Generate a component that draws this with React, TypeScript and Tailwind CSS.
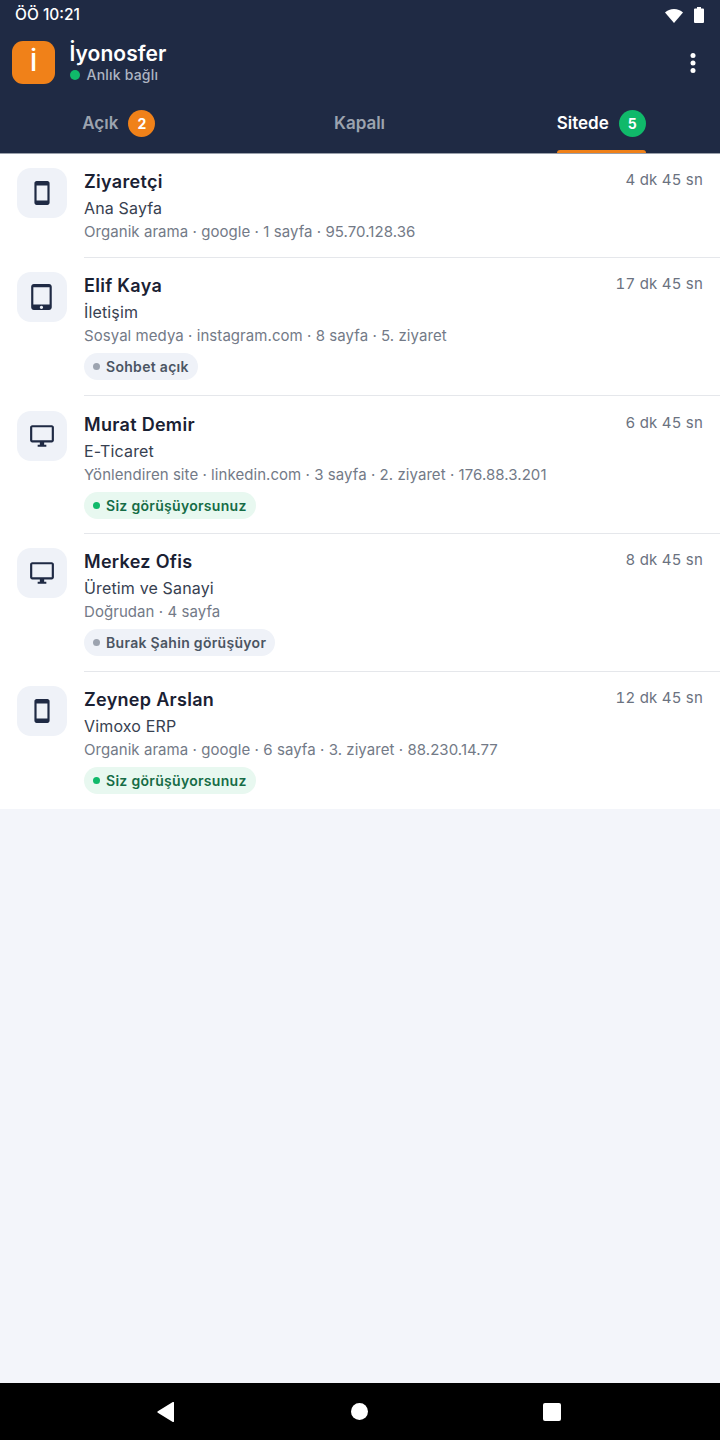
import React from 'react';

type Device = 'phone' | 'tablet' | 'desktop';
type Tone = 'gray' | 'green';

type Visitor = {
    name: string;
    page: string;
    meta: string;
    time: string;
    device: Device;
    padding: string;
    badge?: { label: string; tone: Tone };
};

const visitors: Visitor[] = [
    { name: 'Ziyaretçi', page: 'Ana Sayfa', meta: 'Organik arama · google · 1 sayfa · 95.70.128.36', time: '4 dk 45 sn', device: 'phone', padding: 'pt-[15px] pb-[14px]' },
    { name: 'Elif Kaya', page: 'İletişim', meta: 'Sosyal medya · instagram.com · 8 sayfa · 5. ziyaret', time: '17 dk 45 sn', device: 'tablet', padding: 'pt-[14.4px] pb-[14.5px]', badge: { label: 'Sohbet açık', tone: 'gray' } },
    { name: 'Murat Demir', page: 'E-Ticaret', meta: 'Yönlendiren site · linkedin.com · 3 sayfa · 2. ziyaret · 176.88.3.201', time: '6 dk 45 sn', device: 'desktop', padding: 'pt-[15px] pb-[13.9px]', badge: { label: 'Siz görüşüyorsunuz', tone: 'green' } },
    { name: 'Merkez Ofis', page: 'Üretim ve Sanayi', meta: 'Doğrudan · 4 sayfa', time: '8 dk 45 sn', device: 'desktop', padding: 'pt-[14.4px] pb-[14.5px]', badge: { label: 'Burak Şahin görüşüyor', tone: 'gray' } },
    { name: 'Zeynep Arslan', page: 'Vimoxo ERP', meta: 'Organik arama · google · 6 sayfa · 3. ziyaret · 88.230.14.77', time: '12 dk 45 sn', device: 'phone', padding: 'pt-[14.4px] pb-[14.5px]', badge: { label: 'Siz görüşüyorsunuz', tone: 'green' } },
];

const devicePaths: Record<Device, string> = {
    phone: 'M17 1.01L7 1c-1.1 0-2 .9-2 2v18c0 1.1.9 2 2 2h10c1.1 0 2-.9 2-2V3c0-1.1-.9-1.99-2-1.99zM17 19H7V5h10v14z',
    tablet: 'M18.5 0h-14C3.12 0 2 1.12 2 2.5v19C2 22.88 3.12 24 4.5 24h14c1.38 0 2.5-1.12 2.5-2.5v-19C21 1.12 19.88 0 18.5 0zm-7 23c-.83 0-1.5-.67-1.5-1.5s.67-1.5 1.5-1.5 1.5.67 1.5 1.5-.67 1.5-1.5 1.5zm7.5-4H4V3h15v16z',
    desktop: 'M21 2H3c-1.1 0-2 .9-2 2v12c0 1.1.9 2 2 2h7v2H8v2h8v-2h-2v-2h7c1.1 0 2-.9 2-2V4c0-1.1-.9-2-2-2zm0 14H3V4h18v12z',
};

const DeviceIcon = ({ device }: { device: Device }) => (
    <div className="w-[50px] h-[50px] shrink-0 rounded-[14px] bg-[#eff2f8] flex items-center justify-center">
        <svg width="26" height="26" viewBox="0 0 24 24" fill="#1f2a44">
            <path d={devicePaths[device]} />
        </svg>
    </div>
);

const VisitorRow = ({ visitor }: { visitor: Visitor }) => {
    const { name, page, meta, time, device, badge, padding } = visitor;
    return (
        <div className={`flex gap-[17px] pl-[17px] pr-[17px] ${padding}`}>
            <DeviceIcon device={device} />
            <div className="flex-1 min-w-0">
                <div className="flex items-start justify-between">
                    <span className="text-[18px] leading-[27px] font-semibold tracking-[0.3px] text-[#1a2133]">{name}</span>
                    <span className="text-[15px] leading-[22px] tracking-[0.2px] tabular-nums text-[#6b7280] mt-[1px]">{time}</span>
                </div>
                <p className="text-[16px] leading-[23px] tracking-[0.15px] text-[#374151] mt-[2px]">{page}</p>
                <p className="text-[15px] leading-[23px] text-[#737a87] tracking-[0.06px]">{meta}</p>
                {badge && (
                    <div className={`inline-flex items-center gap-[6px] h-[27px] mt-[6px] px-[9px] rounded-full ${badge.tone === 'green' ? 'bg-[#e8f8f0]' : 'bg-[#eff2f8]'}`}>
                        <span className={`w-[7px] h-[7px] rounded-full ${badge.tone === 'green' ? 'bg-[#10b96a]' : 'bg-[#9ca3af]'}`} />
                        <span className={`text-[14px] font-semibold tracking-[0.3px] ${badge.tone === 'green' ? 'text-[#166c46]' : 'text-[#4b5563]'}`}>{badge.label}</span>
                    </div>
                )}
            </div>
        </div>
    );
};

const Tab = ({ label, count, color, active, className }: { label: string; count?: number; color?: string; active?: boolean; className?: string }) => (
    <div className={`flex-1 flex justify-center ${className ?? ''}`}>
        <div className="relative h-[54px] pb-[6px] flex items-center gap-[10px]">
            <span className={`text-[17px] font-semibold mt-[2px] ${active ? 'text-white' : 'text-[#9ca3af]'}`}>{label}</span>
            {count !== undefined && (
                <span className={`w-[27px] h-[27px] rounded-full text-white text-[14px] font-bold flex items-center justify-center ${color}`}>{count}</span>
            )}
            {active && <div className="absolute left-0 right-0 bottom-0 h-[3px] rounded-t-[3px] bg-[#f08119]" />}
        </div>
    </div>
);

export default function App() {
    return (
        <div className="w-[720px] h-[1440px] flex flex-col bg-[#f3f5fa] overflow-hidden" style={{ fontFamily: 'Inter, sans-serif' }}>
            <div className="relative z-10 bg-[#1f2a44] shadow-[0_1px_0_#9aa0ab]">
                {/* status bar */}
                <div className="h-[30px] flex items-center justify-between pl-[15px] pr-[16px]">
                    <span className="text-[15.5px] font-medium text-white">ÖÖ 10:21</span>
                    <div className="flex items-center gap-[11px]">
                        <svg width="18" height="15" viewBox="0 0 18 15" fill="white"><path d="M0 4.6C2.4 2.3 5.5 1 9 1s6.600 1.300 9 3.600L9 15z" /></svg>
                        <svg width="10" height="16" viewBox="0 0 10 16" fill="white"><path d="M3 0h4v1.500h2a1 1 0 0 1 1 1V15a1 1 0 0 1-1 1H1a1 1 0 0 1-1-1V2.500a1 1 0 0 1 1-1h2z" /></svg>
                    </div>
                </div>
                {/* header */}
                <div className="h-[43px] mt-[11px] flex items-center pl-[12px] pr-[24px]">
                    <div className="w-[43px] h-[43px] rounded-[11px] bg-[#f08119] flex items-center justify-center text-white text-[24px] font-semibold">İ</div>
                    <div className="ml-[14.5px] flex-1">
                        <div className="text-[21px] leading-[25px] font-semibold tracking-[0.05px] text-white">İyonosfer</div>
                        <div className="flex items-center gap-[7px]">
                            <span className="w-[10px] h-[10px] rounded-full bg-[#10b96a]" />
                            <span className="text-[14px] leading-[18px] font-medium tracking-[0.2px] text-[#aeb5c2]">Anlık bağlı</span>
                        </div>
                    </div>
                    <svg width="6" height="20" viewBox="0 0 6 20" fill="white">
                        <circle cx="3" cy="2.500" r="2.500" /><circle cx="3" cy="10" r="2.500" /><circle cx="3" cy="17.500" r="2.500" />
                    </svg>
                </div>
                {/* tabs */}
                <div className="flex mt-[15px]">
                    <Tab label="Açık" count={2} color="bg-[#f08119]" className="pr-[2px]" />
                    <Tab label="Kapalı" className="pl-[1px]" />
                    <Tab label="Sitede" count={5} color="bg-[#10b96a]" active className="pl-[4px]" />
                </div>
            </div>

            {/* visitor list */}
            <div className="bg-white">
                {visitors.map((visitor, i) => (
                    <div key={visitor.name}>
                        {i > 0 && <div className="h-px ml-[84px] bg-[#e5e7eb]" />}
                        <VisitorRow visitor={visitor} />
                    </div>
                ))}
            </div>

            <div className="flex-1" />

            {/* nav bar */}
            <div className="h-[57px] bg-black flex items-center justify-between pl-[157px] pr-[159px]">
                <svg width="18" height="20" viewBox="0 0 18 20" fill="white"><path d="M17 .8v18.400a.8.8 0 0 1-1.200.7L.8 10.700a.8.8 0 0 1 0-1.400L15.800.1a.8.8 0 0 1 1.200.7z" /></svg>
                <span className="w-[17px] h-[17px] ml-[1px] rounded-full bg-white" />
                <span className="w-[18px] h-[18px] rounded-[2px] bg-white" />
            </div>
        </div>
    );
}
